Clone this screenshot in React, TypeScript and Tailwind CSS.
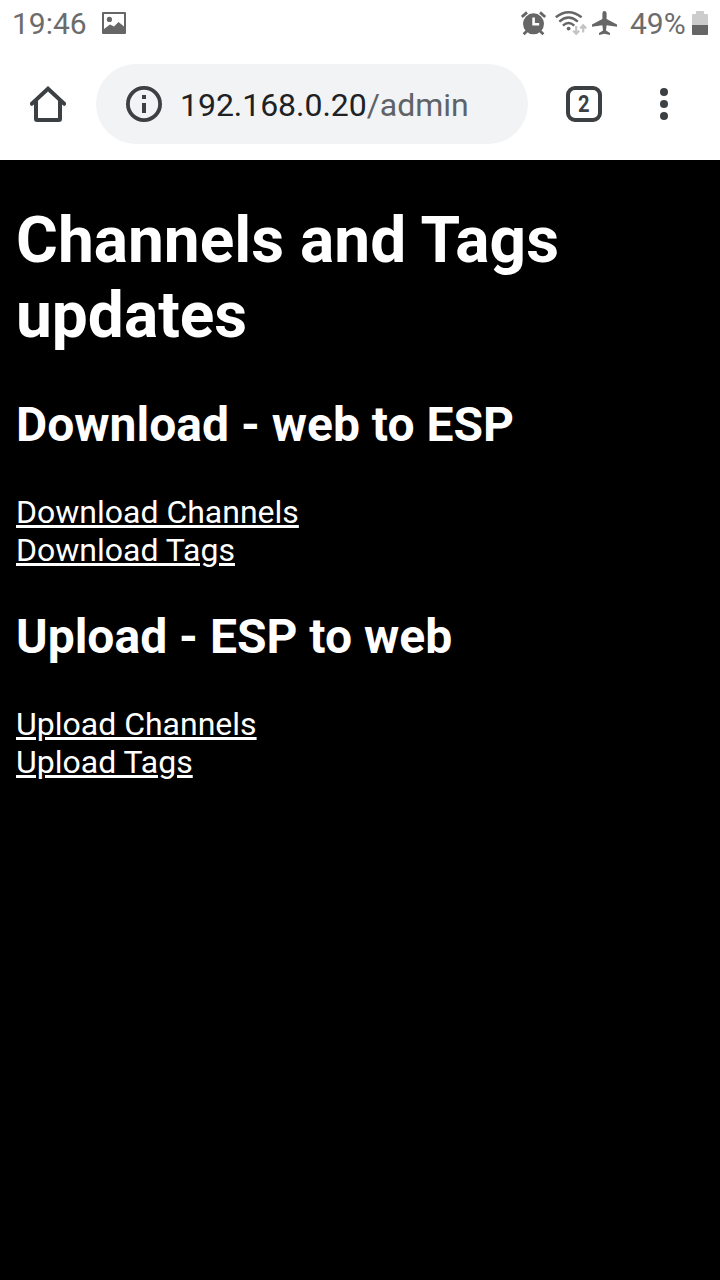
import React from "react";

function PictureIcon() {
  return (
    <svg className="ml-[15px] mt-[12px] h-[22px] w-[24px]" viewBox="0 0 24 22">
      <path
        fill="#666"
        fillRule="evenodd"
        d="M1 0H23Q24 0 24 1V21Q24 22 23 22H1Q0 22 0 21V1Q0 0 1 0ZM2 2V17L8 12.5L12 14.5L16.5 10L22 14.5V2Z"
      />
      <circle cx="7.4" cy="7.4" r="2.6" fill="#666" />
    </svg>
  );
}

function AlarmIcon() {
  return (
    <svg className="mt-[11px] h-[25px] w-[26px]" viewBox="0 0 26 25">
      <g fill="none" stroke="#666" strokeWidth="2.8">
        <path d="M0.8 6L6 1.4M24.2 6L19 1.4" />
        <path d="M6 20L2.6 23.2M19 20L22.4 23.2" />
      </g>
      <circle cx="12.5" cy="12.8" r="10.5" fill="#666" />
      <path d="M12.6 6.5V13.2H18.2" fill="none" stroke="#fff" strokeWidth="2.6" />
    </svg>
  );
}

function WifiIcon() {
  return (
    <svg className="ml-[8px] mt-[11px] h-[25px] w-[32px]" viewBox="0 0 32 25">
      <g fill="none" stroke="#666" strokeWidth="2.4">
        <path d="M0.8 6.3Q13.5 -3.7 26.6 6.3" />
        <path d="M4.3 10.6Q13.5 2.6 22.8 10.6" />
        <path d="M7.9 14.6Q13.5 9.6 19.3 14.6" />
      </g>
      <circle cx="13.6" cy="17.6" r="1.9" fill="#666" />
      <g fill="none" stroke="#c4c4c4" strokeWidth="2.2">
        <path d="M21.2 15V23M18.2 19.8L21.2 22.8L24.2 19.8" />
        <path d="M28.2 21.5V14.2M25.2 17.4L28.2 14.4L31.2 17.4" />
      </g>
    </svg>
  );
}

function PlaneIcon() {
  return (
    <svg className="ml-[5px] mt-[11px] h-[24px] w-[26px]" viewBox="0 0 26 24">
      <path
        fill="#666"
        d="M12.5 0C13.8 0 14.6 1.2 14.6 2.8V8L25 13.4V15.8L14.6 14.2L14 19.6L18 22V24L12.5 22.8L7 24V22L11 19.6L10.4 14.2L0 15.8V13.4L10.4 8V2.8C10.4 1.2 11.2 0 12.5 0Z"
      />
    </svg>
  );
}

function BatteryIcon() {
  return (
    <svg className="ml-[6px] mt-[11px] h-[24px] w-[16px]" viewBox="0 0 16 24">
      <path fill="#ccc" d="M5 0H11Q12 0 12 1V3H15Q16 3 16 4V14H0V4Q0 3 1 3H4V1Q4 0 5 0Z" />
      <path fill="#666" d="M0 14H16V23Q16 24 15 24H1Q0 24 0 23Z" />
    </svg>
  );
}

function StatusBar() {
  return (
    <div className="flex h-12 items-start px-3 text-[#6c6c6c]">
      <span className="mt-[6px] text-[30px] leading-[35px]">19:46</span>
      <PictureIcon />
      <div className="ml-auto flex items-start">
        <AlarmIcon />
        <WifiIcon />
        <PlaneIcon />
        <span className="ml-[12px] mt-[6px] w-[56px] text-[30px] leading-[35px]">49%</span>
        <BatteryIcon />
      </div>
    </div>
  );
}

function Toolbar() {
  return (
    <div className="flex h-28 items-center">
      <svg className="ml-[30px] h-[36px] w-[36px] shrink-0" viewBox="0 0 36 36">
        <path
          fill="#3c4043"
          fillRule="evenodd"
          d="M18 0L36 16.8V18.6Q35.6 20 34 20L32 18.6V33Q32 36 29 36H7Q4 36 4 33V18.6L2 20Q0.4 20 0 18.6V16.8ZM18 5.4L8 14.8V32H28V14.8Z"
        />
      </svg>
      <div className="ml-[30px] flex h-20 w-[432px] items-center rounded-full bg-[#f1f3f4] pl-[30px]">
        <svg className="h-[36px] w-[36px] shrink-0" viewBox="0 0 36 36">
          <circle cx="18" cy="18" r="16.1" fill="none" stroke="#3c4043" strokeWidth="3.8" />
          <path d="M16 9H20V13H16ZM16 17H20V27H16Z" fill="#3c4043" />
        </svg>
        <span className="ml-[18px] mt-[2px] text-[32px] leading-[38px] tracking-[-0.04px] text-[#202124]">
          192.168.0.20<span className="text-[#5f6368]">/admin</span>
        </span>
      </div>
      <div className="ml-[38px] flex h-[36px] w-[36px] items-center justify-center rounded-[9px] border-4 border-[#3c4043]">
        <span className="text-[24px] font-bold leading-[28px] text-[#3c4043] [transform:scaleX(0.84)]">2</span>
      </div>
      <svg className="ml-[58px] h-[32px] w-[8px]" viewBox="0 0 8 32">
        <circle cx="4" cy="4" r="4" fill="#3c4043" />
        <circle cx="4" cy="16" r="4" fill="#3c4043" />
        <circle cx="4" cy="28" r="4" fill="#3c4043" />
      </svg>
    </div>
  );
}

function Links({ items }: { items: string[] }) {
  return (
    <div className="mt-10 flex flex-col items-start">
      {items.map((item) => (
        <a
          key={item}
          href="#"
          className="text-[32px] leading-[38px] underline decoration-[3px] underline-offset-[2px]"
        >
          {item}
        </a>
      ))}
    </div>
  );
}

export default function App() {
  return (
    <div className="flex h-[1280px] w-[720px] flex-col overflow-hidden bg-white font-['Roboto',sans-serif]">
      <StatusBar />
      <Toolbar />
      <main className="flex-1 bg-black px-4 pt-[43px] text-white">
        <h1 className="text-[64px] font-bold leading-[75px]">Channels and Tags updates</h1>
        <h2 className="mt-11 text-[48px] font-bold leading-[56px]">Download - web to ESP</h2>
        <Links items={["Download Channels", "Download Tags"]} />
        <h2 className="mt-10 text-[48px] font-bold leading-[56px]">Upload - ESP to web</h2>
        <Links items={["Upload Channels", "Upload Tags"]} />
      </main>
    </div>
  );
}
